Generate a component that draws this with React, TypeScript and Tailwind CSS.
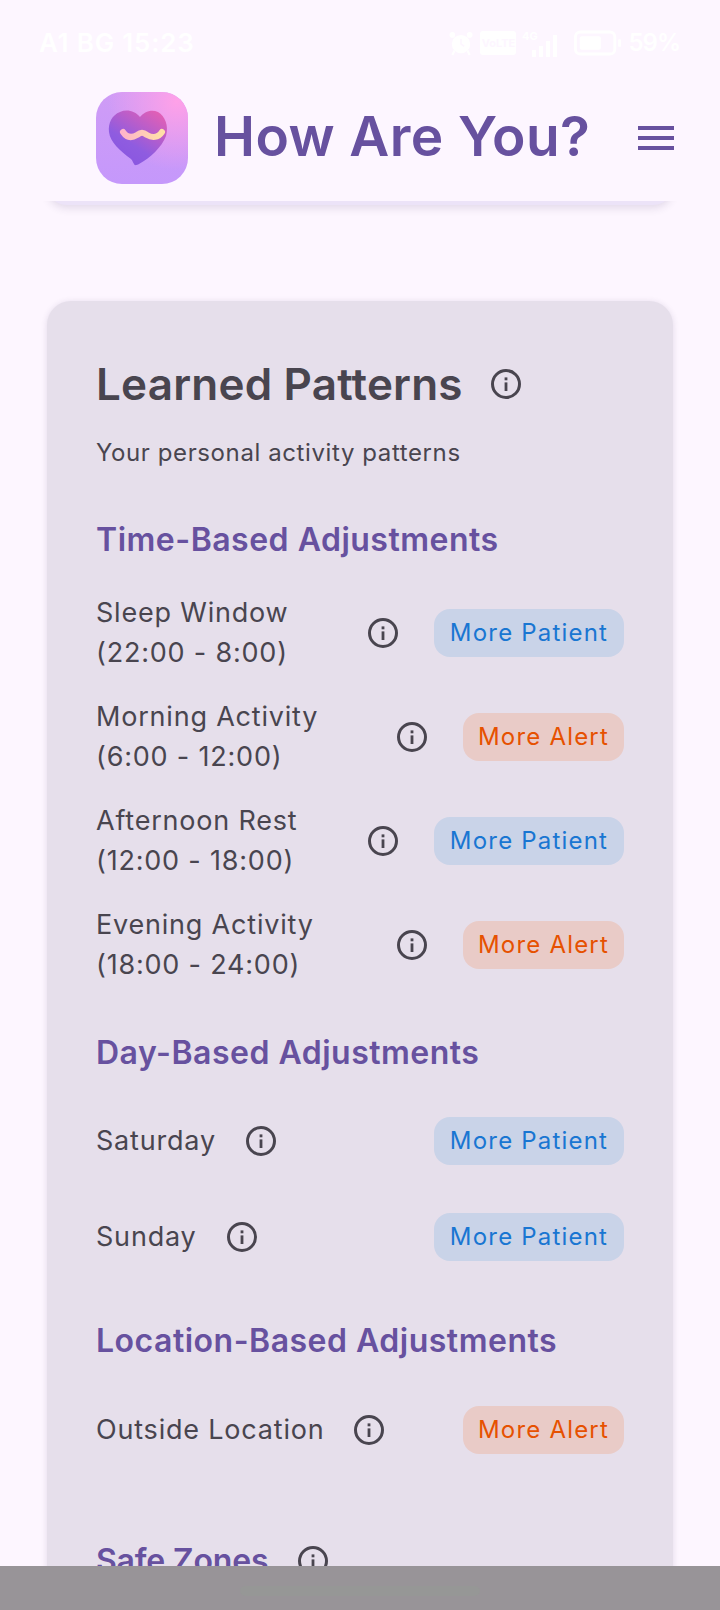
import React from 'react';

const InfoIcon: React.FC<{ className?: string }> = ({ className = '' }) => (
  <svg viewBox="0 0 30 30" className={`w-[30px] h-[30px] shrink-0 ${className}`} fill="none">
    <circle cx="15" cy="15" r="13.5" stroke="#49454f" strokeWidth="3" />
    <rect x="13.6" y="13.4" width="2.8" height="8.6" fill="#49454f" />
    <rect x="13.6" y="8.4" width="2.8" height="2.9" fill="#49454f" />
  </svg>
);

const Pill: React.FC<{ kind: 'patient' | 'alert' }> = ({ kind }) =>
  kind === 'patient' ? (
    <span className="shrink-0 w-[190px] h-[48px] flex items-center justify-center rounded-[16px] bg-[#c9d3e8] text-[#1976d2] text-[24px] tracking-[1.2px]">
      More Patient
    </span>
  ) : (
    <span className="shrink-0 w-[161px] h-[48px] flex items-center justify-center rounded-[16px] bg-[#e9cbc7] text-[#e65100] text-[24px] tracking-[1.2px]">
      More Alert
    </span>
  );

const Row: React.FC<{ label: string; kind: 'patient' | 'alert'; h: string }> = ({ label, kind, h }) => (
  <div className={`flex items-center ${h}`}>
    <div className="flex-1 min-w-0 flex items-center pr-[36px]">
      <span className="text-[27px] leading-[40px] tracking-[0.8px] text-[#49454f]">{label}</span>
      <InfoIcon className="ml-[30px]" />
    </div>
    <Pill kind={kind} />
  </div>
);

const SectionTitle: React.FC<{ children: React.ReactNode; className?: string }> = ({ children, className = '' }) => (
  <h3 className={`text-[32px] leading-[40px] font-semibold tracking-[0.5px] text-[#67519f] ${className}`}>{children}</h3>
);

const Logo = () => (
  <svg viewBox="0 0 92 92" className="w-[92px] h-[92px] shrink-0">
    <defs>
      <linearGradient id="tile" x1="0.5" y1="0" x2="0.5" y2="1">
        <stop offset="0" stopColor="#cf9cf6" />
        <stop offset="1" stopColor="#c598fb" />
      </linearGradient>
      <radialGradient id="glow" cx="0.88" cy="0.1" r="0.75">
        <stop offset="0" stopColor="#ffa1e8" />
        <stop offset="1" stopColor="#ffa1e8" stopOpacity="0" />
      </radialGradient>
      <linearGradient id="heart" x1="0.85" y1="0.05" x2="0.3" y2="0.85">
        <stop offset="0" stopColor="#e05fb6" />
        <stop offset="0.75" stopColor="#8f5ce0" />
        <stop offset="1" stopColor="#8b58e0" />
      </linearGradient>
      <linearGradient id="wave" x1="0" y1="0" x2="1" y2="0">
        <stop offset="0" stopColor="#ffb5c9" />
        <stop offset="1" stopColor="#ffe0a8" />
      </linearGradient>
    </defs>
    <rect width="92" height="92" rx="26" fill="url(#tile)" />
    <rect width="92" height="92" rx="26" fill="url(#glow)" />
    <path
      d="M44 25 C39 19 31 17 24 20 C16 23 12 31 13 40 C14 50 24 59 35 67 C37 69 37 71 38 72 C39 74 41 73 43 72 C54 66 66 55 70 44 C73 34 69 24 62 20 C55 17 48 20 44 25 Z"
      fill="url(#heart)"
    />
    <path
      d="M27 40 C31 46 36 46 41 43 C45 40 47 40 51 43 C56 46 62 46 66 40"
      fill="none"
      stroke="url(#wave)"
      strokeWidth="6"
      strokeLinecap="round"
    />
  </svg>
);

const StatusBar = () => (
  <div className="h-[70px] pt-[26px] pl-[39px] pr-[40px] flex items-start justify-between text-white text-[26px] leading-[34px] font-semibold">
    <span className="tracking-[0.8px]">A1 BG 15:23</span>
    <div className="flex items-center gap-[6px]">
      <svg viewBox="0 0 24 24" className="w-[26px] h-[26px]" fill="white">
        <circle cx="12" cy="13" r="8.5" />
        <circle cx="4" cy="4.5" r="2.6" />
        <circle cx="20" cy="4.5" r="2.6" />
        <path d="M6 19 L4 23 M18 19 L20 23" stroke="white" strokeWidth="2" />
        <path d="M12 8 V13 L15 15" stroke="#fdf6ff" strokeWidth="1.4" fill="none" />
      </svg>
      <span className="w-[36px] h-[24px] rounded-[3px] bg-white text-[#fdf6ff] text-[11px] leading-[24px] text-center font-bold">VoLTE</span>
      <svg viewBox="0 0 44 28" className="w-[44px] h-[28px]" fill="white">
        <rect x="10" y="21" width="4" height="7" />
        <rect x="17" y="17" width="4" height="11" />
        <rect x="24" y="12" width="4" height="16" />
        <rect x="31" y="6" width="4" height="22" />
        <text x="0" y="11" fontSize="11" fontWeight="700" fill="white">4G</text>
      </svg>
      <svg viewBox="0 0 50 26" className="w-[48px] h-[26px] ml-[2px]" fill="none">
        <rect x="1.5" y="1.5" width="41" height="23" rx="5" stroke="white" strokeWidth="3" />
        <rect x="6" y="6" width="22" height="14" rx="2" fill="white" />
        <rect x="46" y="9" width="3" height="8" rx="1" fill="white" />
      </svg>
      <span className="text-[24px] tracking-[-1px]">59%</span>
    </div>
  </div>
);

export default function App() {
  return (
    <div
      className="relative w-[720px] h-[1610px] overflow-hidden bg-[#fdf6ff]"
      style={{ fontFamily: 'Inter, "Noto Sans", sans-serif' }}
    >
      <div className="relative z-10 bg-[#fdf6ff]">
        <StatusBar />
        <header className="mx-[46px] h-[131px] pl-[50px] flex items-start">
          <div className="mt-[22px]">
            <Logo />
          </div>
          <h1 className="ml-[26px] mt-[34px] text-[55px] leading-[64px] font-semibold tracking-[0.4px] text-[#67519f] whitespace-nowrap">
            How Are You?
          </h1>
          <div className="ml-auto mt-[56px] w-[36px] flex flex-col gap-[6px]">
            <div className="h-[4px] bg-[#67519f]" />
            <div className="h-[4px] bg-[#67519f]" />
            <div className="h-[4px] bg-[#67519f]" />
          </div>
        </header>
      </div>
      <div className="mx-[47px] -mt-[20px] h-[24px] rounded-b-[20px] bg-[#ece3f8] shadow-[0_3px_8px_rgba(60,40,90,0.14)]" />

      <main className="mt-[96px] mx-[47px] h-[1400px] rounded-[24px] bg-[#e6dfeb] px-[49px] pt-[58px] shadow-[0_1px_6px_rgba(60,40,90,0.14)]">
        <div className="flex items-center">
          <h2 className="text-[44px] leading-[50px] font-semibold tracking-[0.2px] text-[#49454f]">Learned Patterns</h2>
          <InfoIcon className="ml-[28px]" />
        </div>
        <p className="mt-[27px] text-[24px] leading-[34px] tracking-[0.6px] text-[#49454f]">Your personal activity patterns</p>

        <SectionTitle className="mt-[50px]">Time-Based Adjustments</SectionTitle>
        <div className="mt-[33px] flex flex-col gap-[24px]">
          <Row label="Sleep Window (22:00 - 8:00)" kind="patient" h="h-[80px]" />
          <Row label="Morning Activity (6:00 - 12:00)" kind="alert" h="h-[80px]" />
          <Row label="Afternoon Rest (12:00 - 18:00)" kind="patient" h="h-[80px]" />
          <Row label="Evening Activity (18:00 - 24:00)" kind="alert" h="h-[80px]" />
        </div>

        <SectionTitle className="mt-[48px]">Day-Based Adjustments</SectionTitle>
        <div className="mt-[20px] flex flex-col">
          <Row label="Saturday" kind="patient" h="h-[96px]" />
          <Row label="Sunday" kind="patient" h="h-[96px]" />
        </div>

        <SectionTitle className="mt-[36px]">Location-Based Adjustments</SectionTitle>
        <div className="mt-[39px]">
          <Row label="Outside Location" kind="alert" h="h-[60px]" />
        </div>

        <div className="mt-[81px] flex items-center">
          <h3 className="text-[32px] leading-[40px] font-semibold tracking-[-0.2px] text-[#67519f]">Safe Zones</h3>
          <InfoIcon className="ml-[30px]" />
        </div>
      </main>

      <div className="absolute z-20 left-0 right-0 bottom-0 h-[44px] bg-[#989498] flex justify-center">
        <div className="mt-[20px] w-[240px] h-[10px] rounded-full bg-[#969796]" />
      </div>
    </div>
  );
}
